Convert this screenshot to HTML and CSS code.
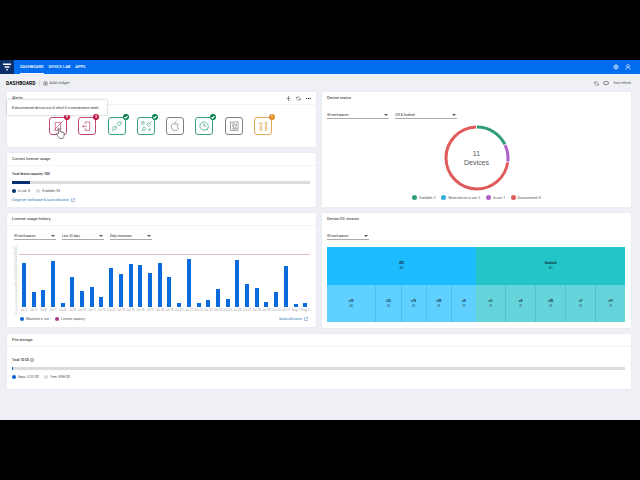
FILE: index.html
```
<!DOCTYPE html>
<html lang="en">
<head>
    <meta charset="UTF-8">
    <meta name="viewport" content="width=device-width, initial-scale=1.0">
    <title>Dashboard</title>
    <link rel="stylesheet" href="styles.css">
</head>
<body>

<div class="app">
    <header class="topbar">
        <a href="#" class="logo" aria-label="Home">
            <svg viewBox="0 0 14 14"><path d="M3 3.500h8v1.600H3zM4.600 6.300h4.800v1.500H4.600zM6 9h2.200l-1.100 2z" fill="#fff"/></svg>
        </a>
        <nav>
            <a href="#" class="active">DASHBOARD</a>
            <a href="#">DEVICE LAB</a>
            <a href="#">APPS</a>
        </nav>
        <div class="topbar-actions">
            <button aria-label="Settings">
                <svg viewBox="0 0 12 12"><circle cx="6" cy="6" r="4"/><circle cx="6" cy="6" r="1.600"/><path d="M6 .8v2M6 9.200v2M.8 6h2M9.200 6h2M2.400 2.400l1.200 1.200M8.400 8.400l1.200 1.200M2.400 9.600l1.200-1.200M8.400 3.600l1.200-1.200"/></svg>
            </button>
            <button aria-label="Account">
                <svg viewBox="0 0 12 12"><circle cx="6" cy="4" r="2.800"/><path d="M1.500 11.500c0-6 9-6 9 0"/></svg>
            </button>
        </div>
    </header>

    <div class="toolbar">
        <h1>DASHBOARD</h1>
        <button class="add-widget">
            <svg viewBox="0 0 12 12"><circle cx="6" cy="6" r="5"/><path d="M6 3v6M3 6h6"/></svg>
            Add widget
        </button>
        <div class="refresh">
            <button aria-label="Refresh"><svg viewBox="0 0 12 12"><path d="M2 5a4 4 0 0 1 7.500-1M10 7a4 4 0 0 1-7.500 1M1 2v3h3M11 10V7H8"/></svg></button>
            <label class="auto">
                <input type="checkbox">
                Auto refresh
            </label>
        </div>
    </div>

    <main class="widgets">
        <div class="column">
            <section class="card">
                <div class="card-head">
                    <h2>Alerts</h2>
                    <div class="card-actions">
                        <button aria-label="Move"><svg viewBox="0 0 12 12"><path d="M6 1v10M1 6h10M4.500 2.500L6 1l1.500 1.500M4.500 9.500L6 11l1.500-1.500"/></svg></button>
                        <button aria-label="Reload"><svg viewBox="0 0 12 12"><path d="M2 5a4 4 0 0 1 7.500-1M10 7a4 4 0 0 1-7.500 1M1 2v3h3M11 10V7H8"/></svg></button>
                        <button aria-label="More"><svg viewBox="0 0 12 12"><path d="M0 6h3M4.500 6h3M9 6h3" stroke-width="2.400"/></svg></button>
                    </div>
                </div>
                <div class="alerts">
                    <button class="alert red" aria-label="Disconnected devices">
                        <svg viewBox="0 0 18 18"><path d="M6 5h6v9H6zM4 14L14 4M8 12.400h2"/></svg>
                        <span class="badge">8</span>
                        <span class="tooltip">8 disconnected devices out of which 0 in maintenance mode.</span>
                        <svg class="hand" viewBox="0 0 18 22"><path d="M6 13V3c0-2 3-2 3 0v6c0-1.500 2.500-1.500 2.500 0v1c0-1.500 2.500-1.500 2.500 0v1c0-1.500 2.500-1.500 2.500.5V15c0 3-2 4-2 6H8c0-2-4-5-5.500-8-.8-1.800 1-2.500 2-1z"/></svg>
                    </button>
                    <button class="alert red" aria-label="Devices in use">
                        <svg viewBox="0 0 18 18"><path d="M7 7V4.500h5v9.500H7v-2.500M4 9.300h5M5.500 7.800L4 9.300l1.500 1.500"/></svg>
                        <span class="badge">8</span>
                    </button>
                    <button class="alert green" aria-label="Connections">
                        <svg viewBox="0 0 18 18"><path d="M9 6.500l2.500 2.500 1.500-1.500c1-1 .5-2-.2-2.700s-1.800-.8-2.600.2zM13 5l1.500-1.500M8.500 11.500L6 9 4.800 10.200c-1 1-.6 2 0 2.600s1.800 1 2.700 0zM5 13l-1.500 1.500M7 10l1-1M8 11l1-1"/></svg>
                        <span class="badge"><svg viewBox="0 0 6 6"><path d="M1.500 3l1.100 1.100 2-2"/></svg></span>
                    </button>
                    <button class="alert green" aria-label="Connectors">
                        <svg viewBox="0 0 18 18"><path d="M10 7.500l2 2 1.300-1.300c1-1 .4-1.800-.2-2.300s-1.500-.8-2.200.1zM13.500 5.500L15 4M9 12l-2-2-1.300 1.300c-.8.8-.4 1.500.2 2.100s1.300.7 2-.1zM5.500 13.500L4 15"/><circle cx="5.500" cy="5.500" r="1.500"/><circle cx="13" cy="13" r="1"/></svg>
                        <span class="badge"><svg viewBox="0 0 6 6"><path d="M1.500 3l1.100 1.100 2-2"/></svg></span>
                    </button>
                    <button class="alert gray" aria-label="Apple">
                        <svg viewBox="0 0 18 18"><path d="M9 7c-1-.5-1.700-.6-2.500-.3C3.800 7.800 5 12.500 7.200 14c.6.3 1-.2 1.800-.2s1.200.5 1.800.2c.9-.5 1.600-1.600 2-2.800-1.600-.8-1.600-3 0-3.800-1-1.200-2.600-1-3.800-.4zM9 6c0-1.500.8-2.400 2-2.600"/></svg>
                    </button>
                    <button class="alert green" aria-label="Time">
                        <svg viewBox="0 0 18 18"><path d="M10 13.500A4.600 4.600 0 1 1 13.600 9M9 6v3.200h2.500M9.500 13.500c2 0 4-1 4.500-3.500M12 14l2-4"/></svg>
                        <span class="badge"><svg viewBox="0 0 6 6"><path d="M1.500 3l1.100 1.100 2-2"/></svg></span>
                    </button>
                    <button class="alert gray" aria-label="Report">
                        <svg viewBox="0 0 18 18"><path d="M5 4.500h8.500v9.500H5zM6.800 6.500h3M6.800 8.500h1.500M6.800 12.200h5M11.500 6.500v2"/><circle cx="9.500" cy="9.500" r="1.800"/><path d="M11 11l1.200 1.200"/></svg>
                    </button>
                    <button class="alert orange" aria-label="Tools">
                        <svg viewBox="0 0 18 18"><path d="M5 5v2l1.500 1.300L8 7V5M6.500 5v1.500M5.700 10h1.700v4H5.700zM6.500 8.300V10M11.500 4.500v3h1.700v-3zM12.300 7.500V10M11.500 10h1.700v4h-1.700z"/></svg>
                        <span class="badge">1</span>
                    </button>
                </div>
            </section>

            <section class="card">
                <div class="card-head"><h2>Current license usage</h2></div>
                <div class="usage">
                    <strong>Total device capacity: 100</strong>
                    <div class="meter"><div class="meter-fill navy" style="width: 6%"></div></div>
                    <ul class="legend">
                        <li><i class="dot navy"></i>In use: 6</li>
                        <li><i class="dot silver"></i>Available: 94</li>
                    </ul>
                    <a href="#" class="more">Usage per workspace &amp; quota allocation
                        <svg viewBox="0 0 12 12"><path d="M5 2H1.500v8.500H10V7M7 1h4v4M11 1L5.500 6.500"/></svg></a>
                </div>
            </section>

            <section class="card">
                <div class="card-head"><h2>License usage history</h2></div>
                <div class="history">
                    <div class="filters">
                        <label class="picker"><select aria-label="Workspace"><option>All workspaces</option></select></label>
                        <label class="picker"><select aria-label="Period"><option>Last 30 days</option></select></label>
                        <label class="picker"><select aria-label="Measure"><option>Daily maximum</option></select></label>
                    </div>
                    <div class="chart">
                        <div class="y-axis" id="yAxis"></div>
                        <div class="plot" id="plot"></div>
                    </div>
                    <div class="chart-foot">
                        <ul class="legend">
                            <li><i class="dot blue"></i>Maximum in use</li>
                            <li><i class="dot plum"></i>License capacity</li>
                        </ul>
                        <a href="#" class="more">Quota allocation
                            <svg viewBox="0 0 12 12"><path d="M5 2H1.500v8.500H10V7M7 1h4v4M11 1L5.500 6.500"/></svg></a>
                    </div>
                </div>
            </section>
        </div>

        <div class="column">
            <section class="card status-card">
                <div class="card-head plain"><h2>Device status</h2></div>
                <div class="filters wide">
                    <label class="picker"><select aria-label="Workspace"><option>All workspaces</option></select></label>
                    <label class="picker"><select aria-label="Platform"><option>iOS &amp; Android</option></select></label>
                </div>
                <div class="donut">
                    <svg viewBox="0 0 66 66">
                        <g fill="none" stroke-width="3" transform="rotate(-90 33 33)">
                            <circle cx="33" cy="33" r="31" pathLength="110" stroke="#2f9e77" stroke-dasharray="19.500 90.500"/>
                            <circle cx="33" cy="33" r="31" pathLength="110" stroke="#b05fc8" stroke-dasharray="9.500 100.500" stroke-dashoffset="-20"/>
                            <circle cx="33" cy="33" r="31" pathLength="110" stroke="#e05c5c" stroke-dasharray="79.500 30.500" stroke-dashoffset="-30"/>
                        </g>
                    </svg>
                    <p>11<br>Devices</p>
                </div>
                <ul class="legend center">
                    <li><i class="dot green"></i>Available: 2</li>
                    <li><i class="dot sky"></i>Reserved not in use: 0</li>
                    <li><i class="dot violet"></i>In use: 1</li>
                    <li><i class="dot coral"></i>Disconnected: 8</li>
                </ul>
            </section>

            <section class="card os-card">
                <div class="card-head plain"><h2>Device OS version</h2></div>
                <div class="filters">
                    <label class="picker"><select aria-label="Workspace"><option>All workspaces</option></select></label>
                </div>
                <div class="treemap">
                    <div class="os ios">
                        <div class="os-name"><b>iOS</b>(6)</div>
                        <div class="versions">
                            <div class="double"><b>v12</b>(2)</div>
                            <div><b>v13</b>(1)</div>
                            <div><b>v15</b>(1)</div>
                            <div><b>v10</b>(1)</div>
                            <div><b>v9</b>(1)</div>
                        </div>
                    </div>
                    <div class="os android">
                        <div class="os-name"><b>Android</b>(5)</div>
                        <div class="versions">
                            <div><b>v8</b>(1)</div>
                            <div><b>v6</b>(1)</div>
                            <div><b>v10</b>(1)</div>
                            <div><b>v7</b>(1)</div>
                            <div><b>v11</b>(1)</div>
                        </div>
                    </div>
                </div>
            </section>
        </div>

        <section class="card full">
            <div class="card-head"><h2>File storage</h2></div>
            <div class="usage storage">
                <strong>Total: 10 GB <svg viewBox="0 0 12 12"><circle cx="6" cy="6" r="5"/><path d="M6 5v4M6 3v1"/></svg></strong>
                <div class="meter"><div class="meter-fill blue" style="width: 0.2%"></div></div>
                <ul class="legend">
                    <li><i class="dot blue"></i>Apps: 0.02 GB</li>
                    <li><i class="dot silver"></i>Free: 9.98 GB</li>
                </ul>
            </div>
        </section>
    </main>
</div>

<script src="chart.js"></script>
</body>
</html>
```

FILE: styles.css
```
* {
    box-sizing: border-box;
}

body {
    margin: 0;
    padding: 60px 0;
    min-height: 100vh;
    display: flex;
    flex-direction: column;
    background: #000;
    color: #333;
    font-family: Inter, "Open Sans", sans-serif;
    font-size: 3px;
    line-height: 4px;
}

h1, h2, p, ul {
    margin: 0;
    padding: 0;
}

button {
    padding: 0;
    border: 0;
    background: none;
    color: inherit;
    font: inherit;
    display: flex;
    align-items: center;
}

svg {
    display: block;
    fill: none;
    stroke: currentColor;
    stroke-width: 1.2;
}

a {
    color: inherit;
    text-decoration: none;
}

.app {
    flex: 1;
    background: #eff0f5;
}

/* Top bar */
.topbar {
    display: flex;
    align-items: stretch;
    height: 14px;
    background: #006cf0;
    color: #fff;
}

.logo {
    width: 14px;
    background: #0a2f6b;
}

.logo svg {
    stroke: none;
}

nav {
    display: flex;
    gap: 5px;
    margin-left: 6px;
    font: 500 4px/13px Roboto, sans-serif;
}

nav a {
    border-bottom: 1px solid transparent;
}

nav .active {
    border-color: #fff;
}

.topbar-actions {
    display: flex;
    gap: 6px;
    margin-left: auto;
    margin-right: 9px;
}

.topbar-actions svg {
    width: 6px;
    height: 6px;
}

/* Page title row */
.toolbar {
    display: flex;
    align-items: center;
    height: 18px;
    padding: 0 9px 0 6px;
}

h1 {
    font: bold 5px/6px Roboto, sans-serif;
    color: #111;
    padding-right: 3px;
    border-right: 1px solid #ddd;
}

.add-widget {
    gap: 2px;
    margin-left: 3px;
    font: 4px/6px Roboto, sans-serif;
    color: #555;
}

.add-widget svg,
.refresh svg {
    width: 5px;
    height: 5px;
}

.refresh {
    display: flex;
    align-items: center;
    gap: 4px;
    margin-left: auto;
    color: #444;
}

.auto {
    display: flex;
    align-items: center;
    gap: 4px;
}

.auto input {
    appearance: none;
    width: 6px;
    height: 4px;
    margin: 0;
    border: 1px solid #888;
    border-radius: 2px;
}

/* Widgets */
.widgets {
    display: grid;
    grid-template-columns: 1fr 1fr;
    gap: 6px;
    padding: 0 9px 6px 7px;
}

.column {
    display: flex;
    flex-direction: column;
    gap: 6px;
    min-width: 0;
}

.full {
    grid-column: 1 / -1;
}

.card {
    background: #fff;
    border-radius: 1px;
    box-shadow: 0 0 2px #dfe0e6;
}

.card-head {
    display: flex;
    align-items: center;
    justify-content: space-between;
    height: 13px;
    padding: 0 5px;
    border-bottom: 1px solid #f4f4f6;
}

.card-head.plain {
    border-color: transparent;
}

h2 {
    font: 400 4px/6px Roboto, sans-serif;
    color: #222;
}

.card-actions {
    display: flex;
    gap: 5px;
    color: #444;
}

.card-actions svg {
    width: 5px;
    height: 5px;
}

/* Alerts */
.alerts {
    display: flex;
    justify-content: space-between;
    align-items: center;
    height: 42px;
    padding: 0 44px 0 42px;
}

.alert {
    position: relative;
    width: 18px;
    height: 18px;
    border: 1px solid;
    border-radius: 3px;
}

.alert > svg {
    flex: 1;
    stroke-width: 0.8;
}

.red { color: #c04a74; }
.gray { color: #808080; }
.orange { color: #e5a75c; }
.alert.green { color: #3aa17c; }

.badge {
    position: absolute;
    top: -4px;
    right: -4px;
    width: 6px;
    height: 6px;
    border-radius: 50%;
    color: #fff;
    font-size: 3px;
    font-weight: bold;
    line-height: 6px;
    text-align: center;
}

.red .badge { background: #c01545; }
.green .badge { background: #06804f; }
.orange .badge { background: #e08a24; }

.tooltip {
    position: absolute;
    left: -43px;
    bottom: 19px;
    padding: 6px 8px 5px 5px;
    background: #fff;
    color: #222;
    box-shadow: 0 0 2px #aaa;
    white-space: nowrap;
}

.alert .hand {
    position: absolute;
    left: 5px;
    top: 9px;
    width: 10px;
    height: 12px;
    fill: #fff;
    stroke: #444;
    stroke-width: 1.2;
}

/* Usage meters */
.usage {
    display: flex;
    flex-direction: column;
    padding: 6px 6px 5px 5px;
}

.usage strong {
    display: flex;
    gap: 1px;
    color: #222;
    font-weight: 600;
}

.usage strong svg {
    width: 4px;
    height: 4px;
}

.meter {
    height: 3px;
    margin: 5px 0;
    background: #dcdcdc;
}

.meter-fill {
    height: 100%;
    min-width: 1px;
}

.legend {
    display: flex;
    gap: 6px;
    list-style: none;
    color: #444;
}

.legend li {
    display: flex;
    align-items: center;
    gap: 2px;
}

.legend.center {
    justify-content: center;
}

.center .dot {
    width: 5px;
    height: 5px;
}

.dot {
    width: 4px;
    height: 4px;
    border-radius: 50%;
}

.navy { background: #06306f; }
.silver { background: #dcdcdc; }
.blue { background: #0c63cf; }
.plum { background: #a83a8a; }
.dot.green { background: #2f9e77; }
.sky { background: #35aee2; }
.violet { background: #b05fc8; }
.coral { background: #e05c5c; }

.more {
    display: flex;
    align-items: center;
    gap: 2px;
    color: #2a6fb0;
}

.more svg {
    width: 4px;
    height: 4px;
}

.usage .more {
    margin-top: 5px;
}

.storage {
    padding-top: 11px;
    padding-bottom: 10px;
}

/* Filters */
.filters {
    display: flex;
    gap: 6px;
    padding: 7px 5px 0;
}

.picker {
    display: flex;
    align-items: center;
    width: 42px;
    height: 7px;
    border-bottom: 1px solid #aaa;
}

.wide .picker {
    width: 62px;
}

.picker::after {
    content: "";
    border: 2px solid transparent;
    border-top-color: #555;
    border-bottom: 0;
    margin-right: 1px;
}

.picker select {
    appearance: none;
    flex: 1;
    min-width: 0;
    padding: 0;
    border: 0;
    background: none;
    color: #111;
    font: inherit;
}

/* Usage history chart */
.history {
    padding: 0 6px 6px 5px;
}

.history .filters {
    padding-left: 2px;
}

.chart {
    display: flex;
    margin-top: 7px;
}

.y-axis {
    display: flex;
    flex-direction: column;
    justify-content: space-between;
    width: 7px;
    height: 60px;
    padding-right: 2px;
    color: #bbb;
    line-height: 3px;
    text-align: right;
}

.plot {
    flex: 1;
    display: flex;
    margin-top: 7px;
    border-top: 1px solid #e3b9cd;
}

.day {
    flex: 1 1 0;
    min-width: 0;
    display: flex;
    flex-direction: column;
    align-items: center;
    color: #999;
    white-space: nowrap;
}

.bar-area {
    display: flex;
    align-items: flex-end;
    height: 52px;
}

.bar {
    width: 4px;
    background: #0c6bdc;
}

.day-label {
    line-height: 7px;
}

.chart-foot {
    display: flex;
    justify-content: space-between;
    padding: 3px 2px 0 8px;
}

/* Device status */
.status-card,
.os-card {
    display: flex;
    flex-direction: column;
    height: 115px;
}

.donut {
    display: grid;
    place-items: center;
    margin: 6px 0 4px;
}

.donut svg,
.donut p {
    grid-area: 1 / 1;
}

.donut svg {
    width: 66px;
    height: 66px;
}

.donut p {
    color: #555;
    font: 7px/9px "Liberation Sans", Arial, sans-serif;
    text-align: center;
}

/* OS versions */
.treemap {
    flex: 1;
    display: flex;
    margin: 7px 6px 6px 5px;
    color: #123;
    text-align: center;
}

.os {
    flex: 1;
    display: flex;
    flex-direction: column;
}

.ios { background: #1cbcff; }
.android { background: #23c5c8; }

.os b {
    display: block;
    line-height: 5px;
}

.os-name {
    flex: 1;
    display: flex;
    flex-direction: column;
    justify-content: center;
}

.versions {
    flex: 1;
    display: flex;
    background: rgba(255, 255, 255, 0.3);
}

.android .versions {
    background: #66d5db;
}

.versions div {
    flex: 1;
    display: flex;
    flex-direction: column;
    justify-content: center;
}

.versions .double {
    flex: 2;
}

.versions div + div {
    border-left: 1px solid rgba(0, 80, 120, 0.15);
}
```

FILE: chart.js
```
const usage = [84, 28, 33, 89, 8, 57, 30, 38, 20, 75, 64, 82, 81, 66, 84, 57, 8, 93, 8, 14, 35, 15, 91, 44, 36, 9, 28, 78, 6, 8];

const plot = document.getElementById("plot");
usage.forEach((value, i) => {
    const day = document.createElement("div");
    day.className = "day";
    const label = i < 28 ? `Jul ${i + 4}` : `Aug ${i - 27}`;
    day.innerHTML = `<div class="bar-area"><div class="bar" style="height: ${value}%"></div></div><span class="day-label">${label}</span>`;
    plot.appendChild(day);
});

const yAxis = document.getElementById("yAxis");
for (let n = 22; n >= 0; n--) {
    const tick = document.createElement("span");
    tick.textContent = n;
    yAxis.appendChild(tick);
}
```
